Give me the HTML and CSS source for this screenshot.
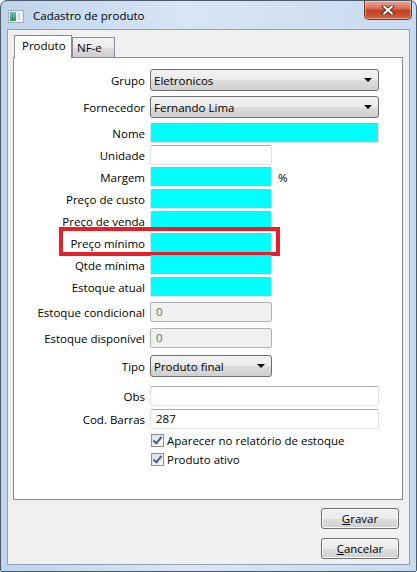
FILE: index.html
```html
<!DOCTYPE html>
<html lang="pt">
<head>
  <meta charset="UTF-8">
  <title>Cadastro de produto</title>
  <link rel="stylesheet" href="styles.css">
</head>
<body>
  <div class="window">
    <div class="titlebar">
      <svg class="app-icon" width="16" height="13" viewBox="0 0 16 13">
        <defs>
          <linearGradient id="ic" x1="0" y1="0" x2="0" y2="1">
            <stop offset="0" stop-color="#6fb8c0"/>
            <stop offset="1" stop-color="#2f8f5a"/>
          </linearGradient>
        </defs>
        <rect x="0.5" y="0.5" width="15" height="12" fill="#e8ecef" stroke="#a6adb4"/>
        <rect x="2" y="2" width="6" height="9" fill="url(#ic)"/>
        <rect x="9" y="2" width="5" height="9" fill="#f6f8f9"/>
        <rect x="10" y="3" width="2" height="7" fill="#c9d6dc"/>
      </svg>
      <span class="title">Cadastro de produto</span>
      <div class="close-btn">
        <svg width="14" height="10" viewBox="0 0 14 10">
          <path d="M3 1.5 L11 8.5 M11 1.5 L3 8.5" stroke="#5a2a20" stroke-width="4" stroke-linecap="square"/>
          <path d="M3 1.5 L11 8.5 M11 1.5 L3 8.5" stroke="#ffffff" stroke-width="2" stroke-linecap="square"/>
        </svg>
      </div>
    </div>

    <div class="client">
      <div class="tabs">
        <div class="tab active">Produto</div>
        <div class="tab">NF-e</div>
      </div>

      <div class="panel">
        <div class="row tall">
          <label>Grupo</label>
          <div class="combo wide"><span>Eletronicos</span><i class="arrow"></i></div>
        </div>
        <div class="row tall gap5">
          <label>Fornecedor</label>
          <div class="combo wide"><span>Fernando Lima</span><i class="arrow"></i></div>
        </div>
        <div class="row gap5">
          <label>Nome</label>
          <div class="field wide cyan"></div>
        </div>
        <div class="row">
          <label>Unidade</label>
          <div class="field short"></div>
        </div>
        <div class="row">
          <label>Margem</label>
          <div class="field short cyan"></div>
          <span class="unit">%</span>
        </div>
        <div class="row">
          <label>Preço de custo</label>
          <div class="field short cyan"></div>
        </div>
        <div class="row">
          <label>Preço de venda</label>
          <div class="field short cyan"></div>
        </div>
        <div class="row marked">
          <label>Preço mínimo</label>
          <div class="field short cyan"></div>
          <div class="highlight"></div>
        </div>
        <div class="row">
          <label>Qtde mínima</label>
          <div class="field short cyan"></div>
        </div>
        <div class="row">
          <label>Estoque atual</label>
          <div class="field short cyan"></div>
        </div>
        <div class="row gap5">
          <label>Estoque condicional</label>
          <div class="field short disabled">0</div>
        </div>
        <div class="row gap6">
          <label>Estoque disponível</label>
          <div class="field short disabled">0</div>
        </div>
        <div class="row tall gap7">
          <label>Tipo</label>
          <div class="combo short"><span>Produto final</span><i class="arrow"></i></div>
        </div>
        <div class="row gap9">
          <label>Obs</label>
          <div class="field wide"></div>
        </div>
        <div class="row gap3">
          <label>Cod. Barras</label>
          <div class="field wide">287</div>
        </div>
        <div class="row check-row gap4">
          <label></label>
          <span class="check"></span>
          <span class="check-text">Aparecer no relatório de estoque</span>
        </div>
        <div class="row check-row gap5">
          <label></label>
          <span class="check"></span>
          <span class="check-text">Produto ativo</span>
        </div>
      </div>

      <div class="actions">
        <button><u>G</u>ravar</button>
        <button><u>C</u>ancelar</button>
      </div>
    </div>
  </div>
</body>
</html>
```

FILE: styles.css
```css
* {
  box-sizing: border-box;
  margin: 0;
  padding: 0;
}

body {
  font-family: 'Open Sans', 'Noto Sans', sans-serif;
  font-size: 11.5px;
  color: #000;
  background: #fff;
}

.window {
  width: 417px;
  height: 572px;
  display: flex;
  flex-direction: column;
  border: 1px solid #4b5b6c;
  border-radius: 7px 7px 2px 2px;
  background: linear-gradient(to right, #bfd4eb 0%, #d8e6f5 45%, #c9dbef 100%);
  padding: 0 6px 6px;
}

/* title bar */
.titlebar {
  height: 28px;
  display: flex;
  align-items: flex-start;
}

.app-icon {
  margin: 9px 0 0 1px;
}

.title {
  margin: 7px 0 0 9px;
  font-size: 11.5px;
  color: #000;
}

.close-btn {
  margin-left: auto;
  margin-right: -2px;
  width: 48px;
  height: 19px;
  border: 1px solid #6f3a30;
  border-top: none;
  border-radius: 0 0 5px 5px;
  background: linear-gradient(to bottom, #e9a898 0%, #d9735c 40%, #c4401f 52%, #cd5434 85%, #d9785b 100%);
  display: flex;
  justify-content: center;
  align-items: center;
  box-shadow: inset 0 0 0 1px rgba(255, 255, 255, 0.35);
}

/* client area */
.client {
  flex: 1;
  background: #f0f0f0;
  border: 1px solid #8da3ba;
  padding: 4px 6px 0 5px;
  display: flex;
  flex-direction: column;
}

.tabs {
  display: flex;
  align-items: flex-end;
  padding-left: 1px;
  height: 23px;
  position: relative;
  z-index: 1;
}

.tab {
  width: 43px;
  height: 20px;
  padding: 0 0 0 4px;
  border: 1px solid #898c95;
  border-bottom: none;
  background: linear-gradient(to bottom, #f3f3f3 0%, #ebebeb 50%, #dddddd 51%, #cfcfcf 100%);
  line-height: 20px;
}

.tab.active {
  height: 23px;
  width: 58px;
  padding: 0 0 0 7px;
  background: #fff;
  line-height: 19px;
  margin-bottom: -1px;
}

.panel {
  height: 443px;
  background: #fff;
  border: 1px solid #898c95;
  padding-top: 11px;
}

.row {
  display: flex;
  align-items: center;
  height: 20px;
  margin-top: 2px;
  position: relative;
}

.row:first-child { margin-top: 0; }
.row.tall { height: 22px; }

.row.gap3 { margin-top: 3px; }
.row.gap4 { margin-top: 4px; }
.row.gap5 { margin-top: 5px; }
.row.gap6 { margin-top: 6px; }
.row.gap7 { margin-top: 7px; }
.row.gap9 { margin-top: 9px; }

.row label {
  width: 131px;
  text-align: right;
  margin-right: 5px;
  white-space: nowrap;
}

.wide { width: 229px; }
.short { width: 122px; }

.field {
  height: 20px;
  border: 1px solid #e2e3ea;
  border-top-color: #abadb3;
  border-radius: 2px;
  background: #fff;
  padding-left: 5px;
  line-height: 18px;
}

.field.cyan {
  background: #00ffff;
}

.field.disabled {
  background: #f0f0f0;
  border-color: #adb2b5;
  color: #6d6d6d;
}

.combo {
  height: 22px;
  border: 1px solid #707070;
  border-radius: 3px;
  background: linear-gradient(to bottom, #f2f2f2 0%, #ebebeb 50%, #dddddd 51%, #cfcfcf 100%);
  display: flex;
  align-items: center;
  justify-content: space-between;
  padding: 0 6px 0 3px;
}

.arrow {
  width: 0;
  height: 0;
  border-left: 4px solid transparent;
  border-right: 4px solid transparent;
  border-top: 4px solid #000;
}

.unit {
  margin-left: 6px;
}

.row.marked .highlight {
  position: absolute;
  left: 45px;
  top: -6px;
  width: 221px;
  height: 29px;
  border: 4px solid #e4202a;
}

.check-row {
  height: 14px;
}

.check {
  width: 13px;
  height: 13px;
  margin-left: 1px;
  border: 1px solid #8e8f8f;
  background: linear-gradient(135deg, #dcdcdc, #fdfdfd);
  position: relative;
}

.check::after {
  content: "";
  position: absolute;
  left: 3px;
  top: 0;
  width: 3px;
  height: 7px;
  border-right: 2px solid #4a5f97;
  border-bottom: 2px solid #4a5f97;
  transform: rotate(40deg);
}

.check-text {
  margin-left: 3px;
}

/* buttons */
.actions {
  display: flex;
  flex-direction: column;
  align-items: flex-end;
  padding-right: 4px;
  padding-top: 8px;
  gap: 9px;
}

.actions button {
  width: 78px;
  height: 21px;
  font-family: inherit;
  font-size: 11.5px;
  color: #000;
  border: 1px solid #707070;
  border-radius: 3px;
  background: linear-gradient(to bottom, #f2f2f2 0%, #ebebeb 50%, #dddddd 51%, #cfcfcf 100%);
  box-shadow: inset 0 0 0 1px #fcfcfc;
}
```
